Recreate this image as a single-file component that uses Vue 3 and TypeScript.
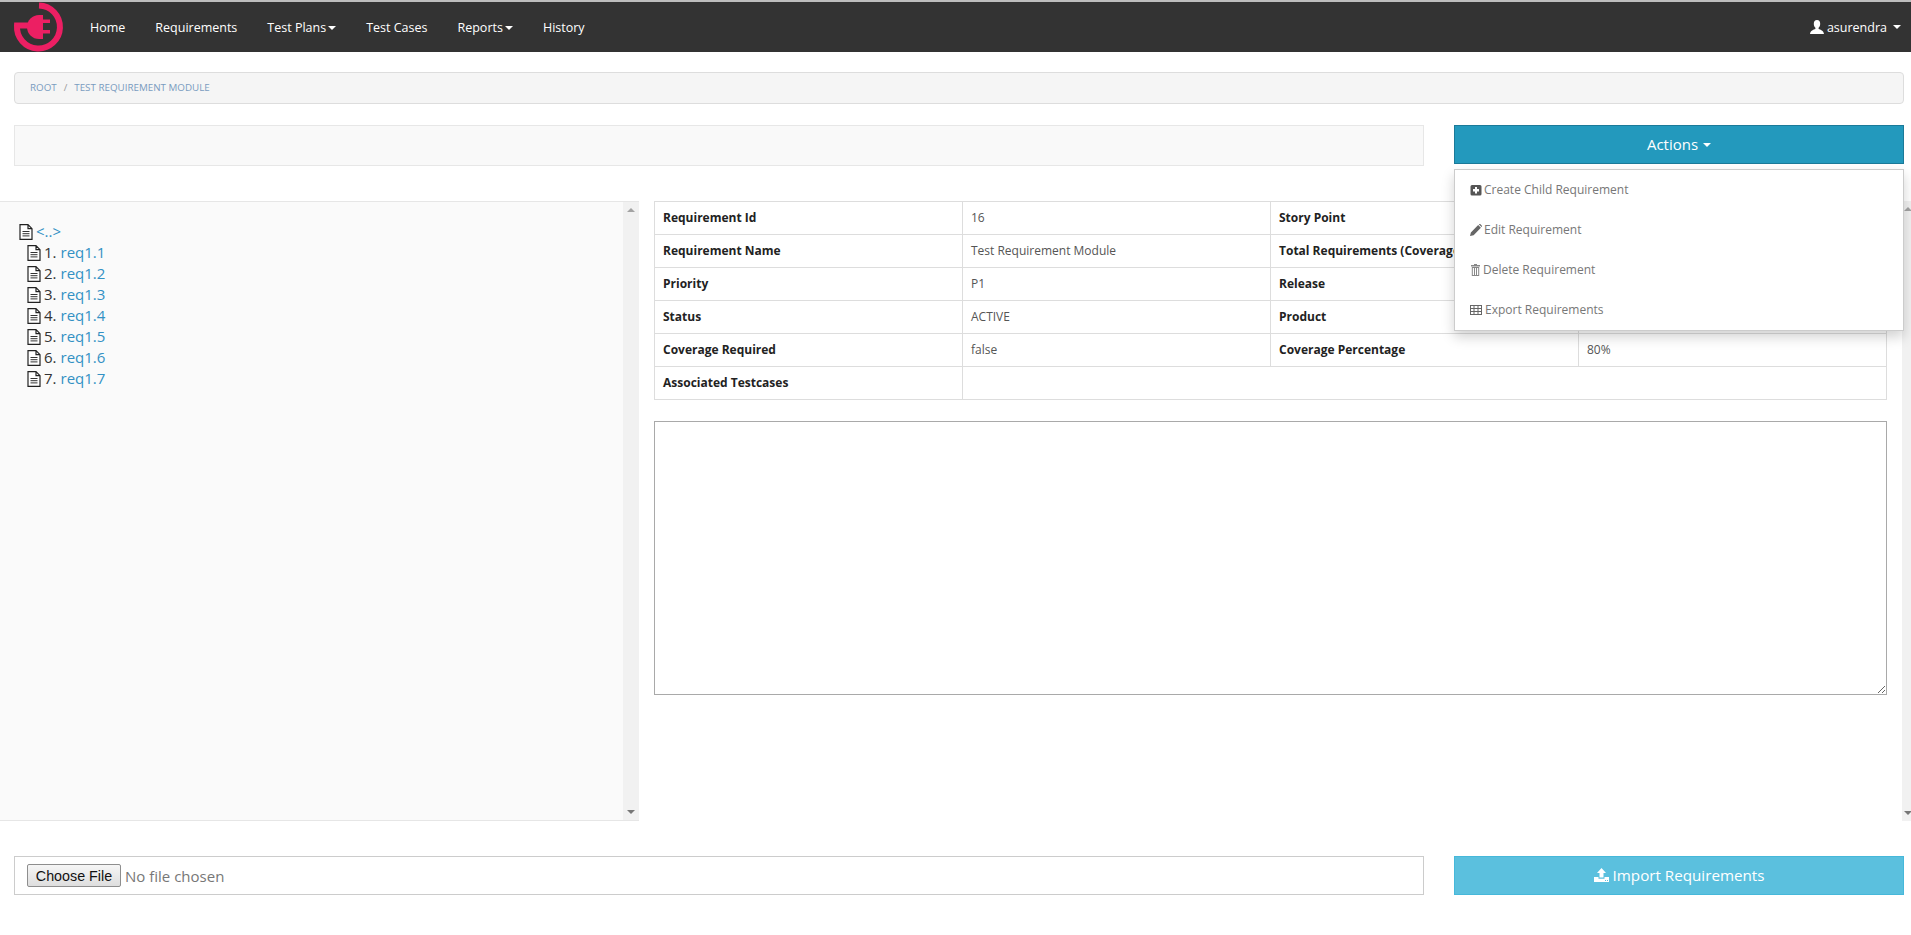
<script setup lang="ts">
const navItems = [
  { label: 'Home', caret: false },
  { label: 'Requirements', caret: false },
  { label: 'Test Plans', caret: true },
  { label: 'Test Cases', caret: false },
  { label: 'Reports', caret: true },
  { label: 'History', caret: false },
]
const treeItems = ['req1.1', 'req1.2', 'req1.3', 'req1.4', 'req1.5', 'req1.6', 'req1.7']
const rows = [
  ['Requirement Id', '16', 'Story Point', ''],
  ['Requirement Name', 'Test Requirement Module', 'Total Requirements (Coverage)', ''],
  ['Priority', 'P1', 'Release', ''],
  ['Status', 'ACTIVE', 'Product', ''],
  ['Coverage Required', 'false', 'Coverage Percentage', '80%'],
]
</script>

<template>
  <div class="app">
    <header class="nav">
      <svg class="logo" width="80" height="50" viewBox="0 0 80 50">
        <path d="M39 3.5 A 21.5 21.5 0 1 1 17 23.5 H 30" fill="none" stroke="#ec1f63" stroke-width="6" />
        <path d="M43 13 V 37 H 39 A 12 12 0 0 1 39 13 Z" fill="#ec1f63" />
        <rect x="43" y="17.5" width="7" height="3.5" fill="#ec1f63" />
        <rect x="43" y="28" width="7" height="3.5" fill="#ec1f63" />
      </svg>
      <nav class="nav-links">
        <a v-for="item in navItems" :key="item.label" class="nav-link">
          {{ item.label }}<span v-if="item.caret" class="caret"></span>
        </a>
      </nav>
      <div class="user">
        <svg class="user-icon" width="14" height="14" viewBox="0 0 14 14">
          <path d="M7 0 C4.8 0 3.8 1.7 3.8 3.8 C3.8 5.6 4.5 7 5.4 7.8 V9 C3.5 9.8 0.5 10.4 0 14 H14 C13.5 10.4 10.5 9.8 8.6 9 V7.8 C9.5 7 10.2 5.6 10.2 3.8 C10.2 1.7 9.2 0 7 0 Z" fill="#fff" />
        </svg>
        <span>asurendra</span>
        <span class="caret user-caret"></span>
      </div>
    </header>

    <div class="breadcrumb">
      <a>ROOT</a><span class="sep">/</span><a>TEST REQUIREMENT MODULE</a>
    </div>

    <div class="split-row toolbar">
      <div class="filter-bar"></div>
      <div class="actions-wrap">
        <button class="actions-btn">Actions<span class="caret"></span></button>
        <ul class="menu">
          <li>
            <svg width="12" height="12" viewBox="0 0 12 12">
              <path fill-rule="evenodd" d="M2 1H10A1.5 1.5 0 0 1 11.5 2.5V10A1.5 1.5 0 0 1 10 11.5H2A1.5 1.5 0 0 1 .5 10V2.5A1.5 1.5 0 0 1 2 1ZM5 3V5H3V7.5H5V9.5H7V7.5H9V5H7V3Z" fill="#555" />
            </svg>
            <span>Create Child Requirement</span>
          </li>
          <li>
            <svg width="12" height="12" viewBox="0 0 11 11">
              <path d="M0 11 L.8 7.7 L7.5 1 L10 3.5 L3.3 10.2 Z M8.2.4 C8.7-.1 9.2-.1 9.6.3 L10.7 1.4 C11.1 1.8 11.1 2.3 10.6 2.8 Z" fill="#666" />
            </svg>
            <span>Edit Requirement</span>
          </li>
          <li>
            <svg width="11" height="12" viewBox="-1 0 11 12">
              <path fill-rule="evenodd" d="M3 0H6V1H9V2.5H0V1H3ZM.8 3H8.2V12H.8ZM1.8 4V11H3V4ZM4 4V11H5V4ZM6 4V11H7.2V4Z" fill="#888" />
            </svg>
            <span>Delete Requirement</span>
          </li>
          <li>
            <svg width="13" height="10" viewBox="0 0 13 10">
              <path fill-rule="evenodd" d="M0 0H12V10H0ZM1 1V3H3.5V1ZM4.5 1V3H7.5V1ZM8.5 1V3H11V1ZM1 4V6H3.5V4ZM4.5 4V6H7.5V4ZM8.5 4V6H11V4ZM1 7V9H3.5V7ZM4.5 7V9H7.5V7ZM8.5 7V9H11V7Z" fill="#666" />
            </svg>
            <span>Export Requirements</span>
          </li>
        </ul>
      </div>
    </div>

    <main class="main">
      <aside class="tree-pane">
        <div class="tree">
          <div class="tree-root">
            <svg class="doc" width="14" height="16" viewBox="0 0 14 16">
              <path d="M1 .7H9L13 4.7V15.3H1Z M9 .7V4.7H13" fill="#fff" stroke="#222" stroke-width="1.2" />
              <path d="M3.5 7.5H10.5M3.5 9.7H10.5M3.5 11.9H10.5" stroke="#333" />
            </svg>
            <a>&lt;..&gt;</a>
          </div>
          <div v-for="(item, i) in treeItems" :key="item" class="tree-item">
            <svg class="doc" width="14" height="16" viewBox="0 0 14 16">
              <path d="M1 .7H9L13 4.7V15.3H1Z M9 .7V4.7H13" fill="#fff" stroke="#222" stroke-width="1.2" />
              <path d="M3.5 7.5H10.5M3.5 9.7H10.5M3.5 11.9H10.5" stroke="#333" />
            </svg>
            <span class="num">{{ i + 1 }}.</span>
            <a>{{ item }}</a>
          </div>
        </div>
        <div class="scrollbar"><i class="arrow up"></i><i class="arrow down"></i></div>
      </aside>

      <section class="detail">
        <table class="info">
          <tbody>
            <tr v-for="row in rows" :key="row[0]">
              <th>{{ row[0] }}</th>
              <td>{{ row[1] }}</td>
              <th>{{ row[2] }}</th>
              <td>{{ row[3] }}</td>
            </tr>
            <tr>
              <th>Associated Testcases</th>
              <td colspan="3"></td>
            </tr>
          </tbody>
        </table>
        <textarea class="notes"></textarea>
      </section>

      <div class="scrollbar page-scroll"><i class="arrow up"></i><i class="arrow down"></i></div>
    </main>

    <div class="split-row footer">
      <div class="file-box">
        <button class="file-btn">Choose File</button>
        <span class="file-name">No file chosen</span>
      </div>
      <button class="import-btn">
        <svg width="15" height="14" viewBox="0 0 15 14">
          <path fill-rule="evenodd" d="M7.5 0L12 5H9.5V9.5H5.5V5H3ZM0 9H4.5V10.8H10.5V9H15V14H0ZM11 12V13H12V12ZM13 12V13H14V12Z" fill="#fff" />
        </svg>
        <span>Import Requirements</span>
      </button>
    </div>
  </div>
</template>

<style>
html, body { margin: 0; background: #fff; overflow: hidden; }
</style>

<style scoped>
.app {
  width: 1911px;
  height: 935px;
  box-sizing: border-box;
  overflow: hidden;
  font-family: "Open Sans", "Liberation Sans", sans-serif;
  font-size: 12px;
  color: #555;
  border-top: 2px solid #bdbdbd;
}
.nav {
  height: 50px;
  background: #333;
  display: flex;
  align-items: center;
  color: #fff;
}
.logo { flex: none; margin-right: 0; overflow: visible; }
.nav-links { display: flex; margin-left: 9px; gap: 30px; font-size: 12.5px; padding-left: 1px; }
.nav-link { color: #fff; white-space: nowrap; }
.caret {
  display: inline-block;
  width: 0;
  height: 0;
  margin-left: 2px;
  vertical-align: middle;
  border-top: 4px solid currentColor;
  border-left: 4px solid transparent;
  border-right: 4px solid transparent;
}
.user {
  margin-left: auto;
  margin-right: 10px;
  display: flex;
  align-items: center;
  font-size: 12.5px;
}
.user-icon { margin-right: 3px; }
.user-caret { margin-left: 6px; }

.breadcrumb {
  margin: 20px 7px 0 14px;
  height: 32px;
  box-sizing: border-box;
  background: #f5f5f5;
  border: 1px solid #ddd;
  border-radius: 4px;
  padding: 0 15px 1px;
  display: flex;
  align-items: center;
  font-size: 9.8px;
  color: #7a9cc0;
}
.sep { margin: 0 7px; color: #999; }

.split-row {
  display: flex;
  margin: 0 7px 0 14px;
  gap: 30px;
}
.toolbar { margin-top: 21px; height: 41px; }
.filter-bar {
  flex: 1;
  background: #f9f9f9;
  border: 1px solid #e7e7e7;
  box-sizing: border-box;
}
.actions-wrap { width: 450px; position: relative; flex: none; }
.actions-btn {
  width: 100%;
  height: 39px;
  background: #2399bd;
  border: 1px solid #1b7a99;
  color: #fff;
  font: 15px "Open Sans", sans-serif;
  padding: 0 0 2px;
}
.actions-btn .caret { margin-left: 5px; }
.menu {
  position: absolute;
  z-index: 5;
  left: 0;
  right: 0;
  top: 44px;
  margin: 0;
  padding: 0;
  list-style: none;
  background: #fff;
  border: 1px solid #ccc;
  box-shadow: 0 6px 12px rgba(0, 0, 0, 0.18);
  font-size: 12px;
  color: #777;
}
.menu li {
  height: 40px;
  box-sizing: border-box;
  padding-bottom: 1px;
  display: flex;
  align-items: center;
  padding-left: 15px;
  gap: 2px;
}

.main {
  display: flex;
  margin-top: 35px;
  height: 620px;
}
.tree-pane {
  width: 639px;
  flex: none;
  display: flex;
  background: #fafafa;
  border-top: 1px solid #e6e6e6;
  border-bottom: 1px solid #e6e6e6;
  box-sizing: border-box;
}
.tree {
  flex: 1;
  padding-top: 19px;
  padding-left: 19px;
  font-size: 15px;
  line-height: 21px;
  color: #333;
}
.tree a { color: #3391c4; }
.tree-root, .tree-item { display: flex; align-items: center; height: 21px; }
.tree-root .doc { margin-right: 3px; }
.tree-item { padding-left: 8px; }
.tree-item .doc { margin-right: 3px; }
.num { margin-right: 4px; }
.scrollbar {
  width: 16px;
  flex: none;
  background: #f1f1f1;
  position: relative;
}
.arrow { position: absolute; left: 4px; width: 0; height: 0; border-left: 4px solid transparent; border-right: 4px solid transparent; }
.arrow.up { top: 6px; border-bottom: 4px solid #a3a3a3; }
.arrow.down { bottom: 6px; border-top: 4px solid #777; }

.detail {
  flex: 1;
  min-width: 0;
  padding-left: 15px;
  padding-right: 15px;
}
.info {
  width: 1233px;
  table-layout: fixed;
  border-collapse: collapse;
  font-size: 12px;
}
.info th, .info td {
  border: 1px solid #ddd;
  height: 33px;
  box-sizing: border-box;
  padding: 0 8px 2px;
  text-align: left;
  white-space: nowrap;
  overflow: hidden;
}
.info th { color: #222; font-weight: 700; }
.info td { color: #555; }
.notes {
  display: block;
  width: 1233px;
  height: 274px;
  box-sizing: border-box;
  margin-top: 21px;
  border: 1px solid #a9a9a9;
  outline: none;
  padding: 2px;
}
.page-scroll { width: 9px; overflow: hidden; }
.page-scroll .arrow { left: 2px; }

.footer { margin-top: 35px; height: 39px; }
.file-box {
  flex: 1;
  border: 1px solid #ccc;
  box-sizing: border-box;
  display: flex;
  align-items: center;
  padding-left: 12px;
  font-size: 15px;
  color: #777;
}
.file-btn {
  height: 23px;
  width: 94px;
  padding: 0;
  font: 14.3px "Liberation Sans", Arial, sans-serif;
  color: #111;
  background: linear-gradient(#f6f6f6, #dedede);
  border: 1px solid #8e8e8e;
  border-radius: 2px;
  margin-right: 4px;
}
.import-btn {
  width: 450px;
  flex: none;
  background: #5bc0de;
  border: 1px solid #46b8da;
  color: #fff;
  font: 15.2px "Open Sans", sans-serif;
  padding: 0 0 2px;
  display: flex;
  align-items: center;
  justify-content: center;
  gap: 4px;
}
</style>
